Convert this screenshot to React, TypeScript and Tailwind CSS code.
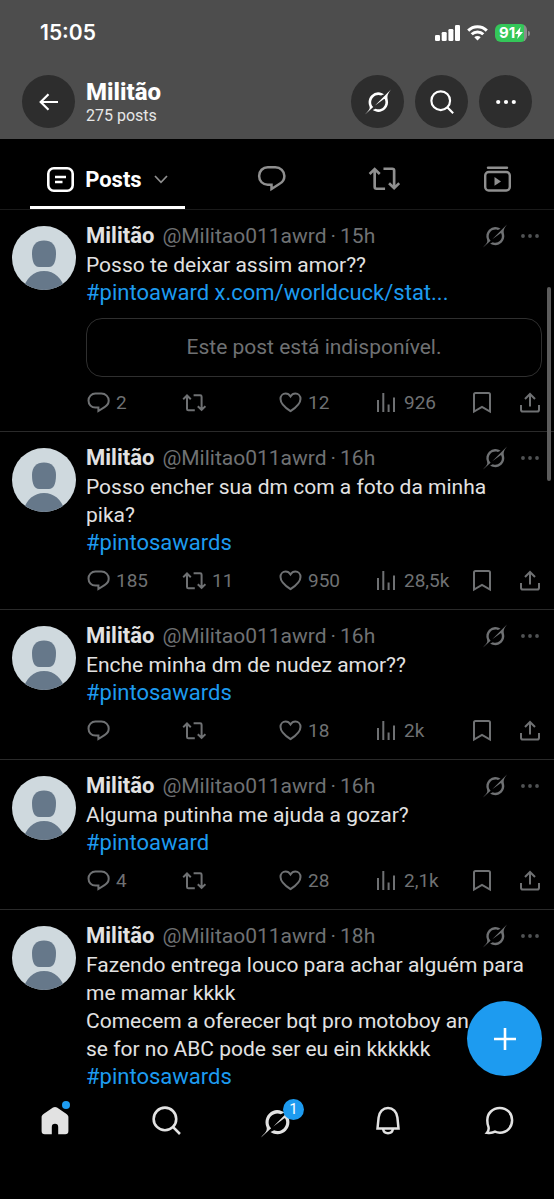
import React from 'react'

type IconProps = { className?: string }

type Post = {
  time: string
  text: string[]
  link: string
  unavailable?: boolean
  stats?: { replies?: string; reposts?: string; likes: string; views: string }
}

const posts: Post[] = [
  {
    time: '15h',
    text: ['Posso te deixar assim amor??'],
    link: '#pintoaward x.com/worldcuck/stat...',
    unavailable: true,
    stats: { replies: '2', likes: '12', views: '926' },
  },
  {
    time: '16h',
    text: ['Posso encher sua dm com a foto da minha', 'pika?'],
    link: '#pintosawards',
    stats: { replies: '185', reposts: '11', likes: '950', views: '28,5k' },
  },
  {
    time: '16h',
    text: ['Enche minha dm de nudez amor??'],
    link: '#pintosawards',
    stats: { likes: '18', views: '2k' },
  },
  {
    time: '16h',
    text: ['Alguma putinha me ajuda a gozar?'],
    link: '#pintoaward',
    stats: { replies: '4', likes: '28', views: '2,1k' },
  },
  {
    time: '18h',
    text: [
      'Fazendo entrega louco para achar alguém para',
      'me mamar kkkk',
      'Comecem a oferecer bqt pro motoboy an',
      'se for no ABC pode ser eu ein kkkkkk',
    ],
    link: '#pintosawards',
  },
]

function GrokIcon({ className }: IconProps) {
  return (
    <svg viewBox="0 0 24 24" fill="currentColor" className={className}>
      <path d="M9.27 15.29l7.978-5.897c.391-.29.95-.177 1.137.272.98 2.369.542 5.215-1.41 7.169-1.951 1.954-4.667 2.382-7.149 1.406l-2.711 1.257c3.889 2.661 8.611 2.003 11.562-.953 2.341-2.344 3.066-5.539 2.388-8.42l.006.007c-.983-4.232.242-5.924 2.75-9.383.06-.082.12-.164.179-.248l-3.301 3.305v-.01L9.267 15.292M7.623 16.723c-2.792-2.67-2.31-6.801.071-9.184 1.761-1.763 4.647-2.483 7.166-1.425l2.705-1.25a7.808 7.808 0 00-1.829-1A8.975 8.975 0 005.984 5.83c-2.533 2.536-3.33 6.436-1.962 9.764 1.022 2.487-.653 4.246-2.34 6.022-.599.63-1.199 1.259-1.682 1.925l7.62-6.815" />
    </svg>
  )
}

function ReplyIcon({ className }: IconProps) {
  return (
    <svg viewBox="0 0 24 24" fill="none" stroke="currentColor" strokeWidth="2" className={className}>
      <path d="M9.400 2.600h6c4.200 0 7.300 3.100 7.300 7 0 2.700-1.400 4.900-3.800 6.200l-6.500 4.200v-3.400h-3C5.400 16.600 2.500 13.600 2.500 9.600s3-7 6.900-7z" />
    </svg>
  )
}

function RepostIcon({ className }: IconProps) {
  return (
    <svg viewBox="0 0 24 24" fill="none" stroke="currentColor" strokeWidth="2" className={className}>
      <path d="M1.200 8.200 5 4.500l3.800 3.700M5 4.900v13c0 .8.6 1.400 1.400 1.400h6.400M11.600 4.300h6.600c.8 0 1.400.6 1.400 1.400v12.600M23.400 15.200l-3.800 3.700-3.800-3.700" />
    </svg>
  )
}

function HeartIcon({ className }: IconProps) {
  return (
    <svg viewBox="0 0 24 24" fill="none" stroke="currentColor" strokeWidth="2" className={className}>
      <path d="M12.500 5.500c-1.200-1.900-3-2.900-4.900-2.900C4.700 2.600 2.500 4.900 2.500 7.900c0 4.600 4.700 8.700 10 12.200 5.300-3.500 10-7.600 10-12.200 0-3-2.200-5.300-5.100-5.300-1.900 0-3.700 1-4.900 2.900z" />
    </svg>
  )
}

function ViewsIcon({ className }: IconProps) {
  return (
    <svg viewBox="0 0 24 24" fill="none" stroke="currentColor" strokeWidth="2" className={className}>
      <path d="M4 21V9M9.300 21V2M14.600 21v-7.500M20 21V6.500" />
    </svg>
  )
}

function BookmarkIcon({ className }: IconProps) {
  return (
    <svg viewBox="0 0 24 24" fill="none" stroke="currentColor" strokeWidth="2" className={className}>
      <path d="M4 3.500C4 2.600 4.600 2 5.500 2h13c.9 0 1.500.6 1.500 1.500v17.100l-8-4.600-8 4.600z" />
    </svg>
  )
}

function ShareIcon({ className }: IconProps) {
  return (
    <svg viewBox="0 0 24 24" fill="none" stroke="currentColor" strokeWidth="2" className={className}>
      <path d="M12 15.500V3M7 8l5-5 5 5M3 14v4.700c0 1 .8 1.800 1.800 1.800h14.400c1 0 1.800-.8 1.800-1.800V14" />
    </svg>
  )
}

function SearchIcon({ className }: IconProps) {
  return (
    <svg viewBox="0 0 28 28" fill="none" stroke="currentColor" strokeWidth="2.500" className={className}>
      <circle cx="12.500" cy="12.500" r="10.900" />
      <path d="M20.200 20.200 27 27" />
    </svg>
  )
}

function DotsIcon({ className }: IconProps) {
  return (
    <svg viewBox="0 0 20 6" fill="currentColor" className={className}>
      <circle cx="2.200" cy="3" r="2.100" />
      <circle cx="10" cy="3" r="2.100" />
      <circle cx="17.800" cy="3" r="2.100" />
    </svg>
  )
}

function StatusBar() {
  return (
    <div className="flex h-[66px] items-center justify-between pr-6 pl-10">
      <span className="font-['Inter',sans-serif] text-[21px] font-semibold">15:05</span>
      <div className="flex items-center gap-[7px]">
        <svg viewBox="0 0 25 16" fill="currentColor" className="h-4 w-[25px]">
          <rect x="0" y="10" width="5" height="6" rx="1.300" />
          <rect x="6.700" y="7" width="5" height="9" rx="1.300" />
          <rect x="13.400" y="4" width="5" height="12" rx="1.300" />
          <rect x="20" y="0" width="5" height="16" rx="1.300" />
        </svg>
        <svg viewBox="0 0 21 16" fill="none" stroke="currentColor" strokeWidth="3" className="h-4 w-[21px]">
          <path d="M1.200 5.600a13.300 13.300 0 0 1 18.600 0" />
          <path d="M4.700 9.300a8.300 8.300 0 0 1 11.600 0" />
          <path d="M7.300 12.300a4.600 4.600 0 0 1 6.400 0L10.500 15.500z" fill="currentColor" stroke="none" />
        </svg>
        <div className="flex items-center gap-px">
          <div className="flex h-[18px] w-8 items-center justify-center overflow-hidden rounded-md bg-linear-to-r from-[#34c759] from-92% to-[#8b8b8b] to-92%">
            <span className="font-['Inter',sans-serif] text-[15px] font-bold">91</span>
            <svg viewBox="0 0 8 12" fill="currentColor" className="h-3 w-2">
              <path d="M5.600 0 0 7h3.200L2.200 12 8 4.900H4.700z" />
            </svg>
          </div>
          <div className="h-[5px] w-[2px] rounded-r bg-[#8b8b8b]" />
        </div>
      </div>
    </div>
  )
}

function RoundButton({ label, children }: { label: string; children: React.ReactNode }) {
  return (
    <button
      aria-label={label}
      className="flex size-[53px] shrink-0 items-center justify-center rounded-full bg-[#2d2d2d]"
    >
      {children}
    </button>
  )
}

function Header() {
  return (
    <header className="shrink-0 bg-[#4d4d4d] pb-[11px]">
      <StatusBar />
      <div className="flex items-center px-[22px] pt-[9px]">
        <RoundButton label="Back">
          <svg viewBox="0 0 20 18" fill="none" stroke="currentColor" strokeWidth="2.200" className="h-[18px] w-5">
            <path d="M19 9H2M9.500 1.200 1.700 9l7.800 7.800" />
          </svg>
        </RoundButton>
        <div className="ml-[11px] flex-1">
          <h1 className="text-2xl leading-7 font-extrabold">Militão</h1>
          <p className="text-base leading-[19px] text-[#e7e7e7]">275 posts</p>
        </div>
        <div className="flex gap-[11px]">
          <RoundButton label="Grok">
            <GrokIcon className="size-[26px]" />
          </RoundButton>
          <RoundButton label="Search">
            <SearchIcon className="size-6" />
          </RoundButton>
          <RoundButton label="More">
            <DotsIcon className="h-[6px] w-5" />
          </RoundButton>
        </div>
      </div>
    </header>
  )
}

function Tabs() {
  return (
    <nav className="flex h-[71px] shrink-0 border-b border-[#1a1a1a] text-[#8f8f8f]">
      <div className="flex grow-[19] basis-0 justify-center">
        <button className="flex items-center border-b-3 border-white px-[17px] pt-6 pb-[10px] text-white">
          <svg viewBox="0 0 27 25" fill="none" stroke="currentColor" strokeWidth="2.600" className="h-[25px] w-[27px]">
            <rect x="1.300" y="1.300" width="24.400" height="22.400" rx="5.500" />
            <path d="M8 10h11M8 15h7.500" />
          </svg>
          <span className="ml-[11px] text-[22px] font-bold">Posts</span>
          <svg viewBox="0 0 14 9" fill="none" stroke="#8f8f8f" strokeWidth="1.700" className="ml-3 h-[9px] w-[14px]">
            <path d="m1 1 6 6.300L13 1" />
          </svg>
        </button>
      </div>
      <button aria-label="Replies" className="flex grow-10 basis-0 items-center justify-center pt-[10px]">
        <ReplyIcon className="size-[30px]" />
      </button>
      <button aria-label="Reposts" className="flex grow-10 basis-0 items-center justify-center pt-[10px]">
        <RepostIcon className="size-8" />
      </button>
      <button aria-label="Videos" className="flex grow-10 basis-0 items-center justify-center pt-[10px]">
        <svg viewBox="0 0 27 26" fill="none" stroke="currentColor" strokeWidth="2.400" className="h-[26px] w-[27px]">
          <path d="M4 1.800h19" strokeLinecap="round" />
          <rect x="1.200" y="6" width="24.600" height="18.500" rx="3.500" />
          <path d="M10.500 11v8.800l6.500-4.400z" fill="currentColor" stroke="none" />
        </svg>
      </button>
    </nav>
  )
}

function Avatar() {
  return (
    <svg viewBox="0 0 64 64" className="mt-1 size-16 shrink-0 rounded-full">
      <rect width="64" height="64" fill="#cfd9de" />
      <path d="M32 14.500c7.500 0 12 4.600 12 12.500 0 9-2.500 14-7 14H27c-4.500 0-7-5-7-14 0-7.900 4.500-12.500 12-12.500z" fill="#66788a" />
      <path d="M11 64c2.500-11.500 10.500-19 21-19s18.500 7.500 21 19z" fill="#66788a" />
    </svg>
  )
}

function Action({ label, count, children }: { label: string; count?: string; children: React.ReactNode }) {
  return (
    <button aria-label={label} className="flex items-center gap-[6px] whitespace-nowrap">
      {children}
      {count && <span>{count}</span>}
    </button>
  )
}

function PostItem({ post }: { post: Post }) {
  return (
    <article className="flex gap-[10px] border-b border-[#2a2a2a] px-3 pt-3 pb-[18px]">
      <Avatar />
      <div className="min-w-0 flex-1">
        <div className="flex h-7 items-center text-[21px] text-[#6f7173]">
          <div className="flex flex-1 items-baseline leading-7">
            <span className="text-[22px] font-bold text-[#e2e2e2]">Militão</span>
            <span className="ml-2">@Militao011awrd</span>
            <span className="mx-1">·</span>
            <span>{post.time}</span>
          </div>
          <button aria-label="Grok" className="mr-[14px]">
            <GrokIcon className="size-6" />
          </button>
          <button aria-label="More" className="mr-[3px] text-[#505254]">
            <DotsIcon className="h-[6px] w-[18px]" />
          </button>
        </div>
        <p className="mt-px text-[21px] leading-7 text-[#e2e2e2]">
          {post.text.map((line) => (
            <span key={line} className="block whitespace-nowrap">
              {line}
            </span>
          ))}
          <a href="#" className="block text-[22px] whitespace-nowrap text-[#1d9bf0]">
            {post.link}
          </a>
        </p>
        {post.unavailable && (
          <div className="mt-[11px] mb-3 flex h-[59px] items-center justify-center rounded-2xl border border-[#2f2f2f] text-[21px] text-[#6f7173]">
            Este post está indisponível.
          </div>
        )}
        {post.stats && (
          <div className="mt-[10px] grid h-6 grid-cols-[repeat(4,1fr)_48px_24px] items-center text-[19px] text-[#6f7173] [div+&]:mt-0">
            <Action label="Reply" count={post.stats.replies}>
              <ReplyIcon className="size-6" />
            </Action>
            <Action label="Repost" count={post.stats.reposts}>
              <RepostIcon className="size-6" />
            </Action>
            <Action label="Like" count={post.stats.likes}>
              <HeartIcon className="size-6" />
            </Action>
            <Action label="Views" count={post.stats.views}>
              <ViewsIcon className="size-6" />
            </Action>
            <Action label="Bookmark">
              <BookmarkIcon className="size-6" />
            </Action>
            <Action label="Share">
              <ShareIcon className="size-6" />
            </Action>
          </div>
        )}
      </div>
    </article>
  )
}

function BottomNav() {
  return (
    <nav className="grid h-[111px] shrink-0 grid-cols-5 items-start justify-items-center bg-black pt-[18px] text-[#e2e2e2]">
      <a href="#" aria-label="Home" className="relative">
        <svg viewBox="0 0 30 30" fill="currentColor" className="size-[30px]">
          <path d="M13 1.600a4 4 0 0 1 4 0l9.500 6.300c1.200.8 1.900 1.800 1.900 3.200V25a3.200 3.200 0 0 1-3.200 3.200h-7V21a3.200 3.200 0 0 0-6.400 0v7.200h-7A3.200 3.200 0 0 1 1.600 25V11.100c0-1.400.7-2.400 1.900-3.200z" />
        </svg>
        <span className="absolute -top-[5px] right-0 size-2 rounded-full bg-[#1d9bf0]" />
      </a>
      <a href="#" aria-label="Search">
        <SearchIcon className="size-[29px]" />
      </a>
      <a href="#" aria-label="Grok" className="relative">
        <GrokIcon className="size-8" />
        <span className="absolute -top-[7px] left-[22px] flex size-[21px] items-center justify-center rounded-full bg-[#1d9bf0] text-[15px] text-white">
          1
        </span>
      </a>
      <a href="#" aria-label="Notifications">
        <svg viewBox="0 0 30 30" fill="none" stroke="currentColor" strokeWidth="2.500" className="size-[30px]">
          <path d="M4.500 22.500 5.600 11.500C6.200 5.800 10 2 15 2s8.800 3.800 9.400 9.500l1.100 11zM10 23c.6 2.600 2.500 4.200 5 4.200s4.400-1.600 5-4.200" />
        </svg>
      </a>
      <a href="#" aria-label="Messages">
        <svg viewBox="0 0 30 30" fill="none" stroke="currentColor" strokeWidth="2.500" className="size-[30px]">
          <path d="M15.800 2c7 0 12.300 5.200 12.300 12.300s-5.200 12.400-12.200 12.400c-1.900 0-3.400-.3-4.900-1-2.300 1.300-4.900 1.500-8 1.100 1.500-1.700 2-3.500 1.500-5.800-.8-2-1.200-4.300-1.200-6.700C3.300 7.200 8.700 2 15.800 2z" />
        </svg>
      </a>
    </nav>
  )
}

export default function App() {
  return (
    <div className="relative flex h-screen flex-col overflow-hidden bg-black font-['Roboto',sans-serif] text-white">
      <Header />
      <Tabs />
      <main className="min-h-0 flex-1 overflow-hidden">
        {posts.map((post) => (
          <PostItem key={post.text[0]} post={post} />
        ))}
      </main>
      <BottomNav />
      <div className="absolute top-[287px] right-[3px] h-[194px] w-1 rounded-full bg-[#5c5c5c]" />
      <button
        aria-label="New post"
        className="absolute right-3 bottom-[123px] flex size-[75px] items-center justify-center rounded-full bg-[#1d9bf0]"
      >
        <svg viewBox="0 0 22 22" fill="none" stroke="currentColor" strokeWidth="2.600" className="size-[22px]">
          <path d="M11 0v22M0 11h22" />
        </svg>
      </button>
    </div>
  )
}
